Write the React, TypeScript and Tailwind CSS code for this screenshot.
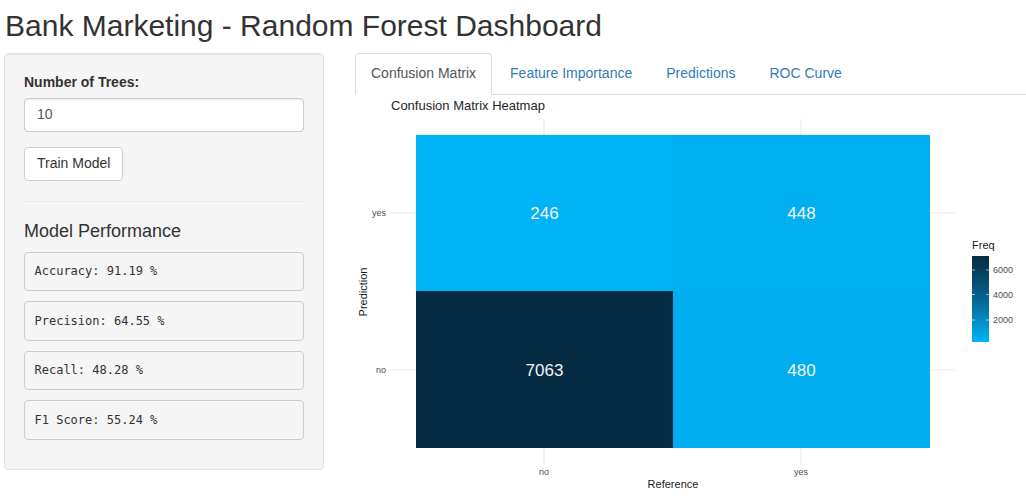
import React from "react";

const metrics = [
  "Accuracy: 91.19 %",
  "Precision: 64.55 %",
  "Recall: 48.28 %",
  "F1 Score: 55.24 %",
];

const tabs = ["Confusion Matrix", "Feature Importance", "Predictions", "ROC Curve"];

function Heatmap() {
  const x0 = 61, x1 = 318, x2 = 575;
  const y0 = 40, y1 = 196, y2 = 353;
  const grid = "#ebebeb";
  const cells = [
    { x: x0, y: y0, w: x1 - x0, h: y1 - y0, c: "#00b3f6", v: "246" },
    { x: x1, y: y0, w: x2 - x1, h: y1 - y0, c: "#00aff0", v: "448" },
    { x: x0, y: y1, w: x1 - x0, h: y2 - y1, c: "#052c43", v: "7063" },
    { x: x1, y: y1, w: x2 - x1, h: y2 - y1, c: "#00aeef", v: "480" },
  ];
  return (
    <svg width="671" height="400" className="block">
      <defs>
        <linearGradient id="cb" x1="0" y1="0" x2="0" y2="1">
          <stop offset="0" stopColor="#072a41" />
          <stop offset="0.5" stopColor="#05648f" />
          <stop offset="1" stopColor="#00b5f7" />
        </linearGradient>
      </defs>
      <text x="36" y="14.5" fontSize="13" fill="#262626" fontFamily="Liberation Sans, Arial, sans-serif">
        Confusion Matrix Heatmap
      </text>
      {/* gridlines */}
      <line x1="189" y1="24" x2="189" y2="370" stroke={grid} strokeWidth="1.2" />
      <line x1="446" y1="24" x2="446" y2="370" stroke={grid} strokeWidth="1.2" />
      <line x1="36" y1="118" x2="600" y2="118" stroke={grid} strokeWidth="1.2" />
      <line x1="36" y1="275" x2="600" y2="275" stroke={grid} strokeWidth="1.2" />
      {cells.map((c) => (
        <g key={c.v}>
          <rect x={c.x} y={c.y} width={c.w} height={c.h} fill={c.c} />
          <text
            x={c.x + c.w / 2}
            y={c.y + c.h / 2 + 6}
            textAnchor="middle"
            fontSize="17"
            fill="#f2f2f2"
            fontFamily="Liberation Sans, Arial, sans-serif"
          >
            {c.v}
          </text>
        </g>
      ))}
      {/* axis ticks */}
      <g fontSize="9" fill="#4d4d4d" fontFamily="Liberation Sans, Arial, sans-serif">
        <text x="31" y="121" textAnchor="end">yes</text>
        <text x="31" y="278" textAnchor="end">no</text>
        <text x="189" y="380" textAnchor="middle">no</text>
        <text x="446" y="380" textAnchor="middle">yes</text>
      </g>
      <text x="318" y="393" textAnchor="middle" fontSize="11" fill="#1a1a1a" fontFamily="Liberation Sans, Arial, sans-serif">
        Reference
      </text>
      <text
        x="0"
        y="0"
        transform="translate(12 197) rotate(-90)"
        textAnchor="middle"
        fontSize="11"
        fill="#1a1a1a"
        fontFamily="Liberation Sans, Arial, sans-serif"
      >
        Prediction
      </text>
      {/* legend */}
      <text x="617" y="154" fontSize="11" fill="#1a1a1a" fontFamily="Liberation Sans, Arial, sans-serif">
        Freq
      </text>
      <rect x="617" y="161" width="17" height="86" fill="url(#cb)" />
      {[175, 199.5, 225].map((y) => (
        <g key={y}>
          <line x1="617" y1={y} x2="620" y2={y} stroke="#ffffff" strokeOpacity="0.6" strokeWidth="1" />
          <line x1="631" y1={y} x2="634" y2={y} stroke="#ffffff" strokeOpacity="0.6" strokeWidth="1" />
        </g>
      ))}
      <g fontSize="9" fill="#4d4d4d" fontFamily="Liberation Sans, Arial, sans-serif">
        <text x="638" y="178">6000</text>
        <text x="638" y="202.5">4000</text>
        <text x="638" y="228">2000</text>
      </g>
    </svg>
  );
}

export default function App() {
  return (
    <div className="font-['Liberation_Sans',Arial,sans-serif] text-[14px] leading-[1.42857] text-[#333] bg-white w-[1026px] h-[502px] overflow-hidden">
      <h2 className="text-[30px] leading-[1.1] font-normal pl-[5px] pt-[9px] mb-[11px]">
        Bank Marketing - Random Forest Dashboard
      </h2>
      <div className="flex items-start">
        <div className="ml-[4px] w-[320px] shrink-0 bg-[#f5f5f5] border border-[#e3e3e3] rounded-[4px] p-[19px] shadow-[inset_0_1px_1px_rgba(0,0,0,0.05)]">
          <label className="block font-bold mb-[5px]">Number of Trees:</label>
          <div className="h-[34px] border border-[#ccc] rounded-[4px] bg-white px-[12px] py-[6px] text-[#555] shadow-[inset_0_1px_1px_rgba(0,0,0,0.075)]">
            10
          </div>
          <div className="mt-[15px]">
            <button className="h-[34px] px-[12px] py-[6px] bg-white border border-[#ccc] rounded-[4px] text-[#333]">
              Train Model
            </button>
          </div>
          <div className="mt-[20px] mb-[20px] border-t border-[#e8e8e8]" />
          <h4 className="text-[18px] leading-[1.1] font-normal mb-[10px]">Model Performance</h4>
          <div className="flex flex-col gap-[10px] mb-[10px]">
            {metrics.map((m) => (
              <pre
                key={m}
                className="font-['DejaVu_Sans_Mono',monospace] text-[12px] leading-[18.57px] p-[9.5px] bg-[#f5f5f5] border border-[#ccc] rounded-[4px] text-[#333]"
              >
                {m}
              </pre>
            ))}
          </div>
        </div>
        <div className="ml-[31px] flex-1 min-w-0">
          <ul className="flex border-b border-[#ddd]">
            {tabs.map((t, i) => (
              <li key={t} className="mr-[2px] -mb-px">
                <span
                  className={
                    i === 0
                      ? "block px-[15px] py-[10px] border border-[#ddd] border-b-transparent rounded-t-[4px] bg-white text-[#555]"
                      : "block px-[15px] py-[10px] border border-transparent text-[#337ab7]"
                  }
                >
                  {t}
                </span>
              </li>
            ))}
          </ul>
          <Heatmap />
        </div>
      </div>
    </div>
  );
}
